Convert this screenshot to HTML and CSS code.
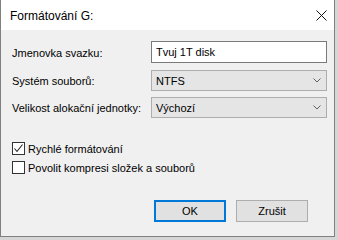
FILE: index.html
```html
<!DOCTYPE html>
<html lang="cs">
<head>
<meta charset="utf-8">
<link rel="stylesheet" href="styles.css">
</head>
<body>
<div class="window">
  <div class="titlebar">
    <span class="title">Formátování G:</span>
    <svg class="close" width="11" height="11" viewBox="0 0 11 11"><path d="M0.5 0.5 L10.5 10.5 M10.5 0.5 L0.5 10.5" stroke="#111" stroke-width="1" fill="none"/></svg>
  </div>
  <div class="content">
    <div class="form">
      <label class="label">Jmenovka svazku:</label>
      <div class="textbox">Tvuj 1T disk</div>
      <label class="label">Systém souborů:</label>
      <div class="combo"><span>NTFS</span><svg width="8" height="5" viewBox="0 0 8 5"><path d="M0.5 0.5 L4 4 L7.5 0.5" stroke="#606060" fill="none"/></svg></div>
      <label class="label">Velikost alokační jednotky:</label>
      <div class="combo"><span>Výchozí</span><svg width="8" height="5" viewBox="0 0 8 5"><path d="M0.5 0.5 L4 4 L7.5 0.5" stroke="#606060" fill="none"/></svg></div>
    </div>
    <div class="checks">
      <div class="check"><span class="box"><svg width="11" height="11" viewBox="0 0 11 11"><path d="M1.5 5.5 L4 8.5 L9.5 1.5" stroke="#222" stroke-width="1.1" fill="none"/></svg></span><span>Rychlé formátování</span></div>
      <div class="check"><span class="box"></span><span>Povolit kompresi složek a souborů</span></div>
    </div>
    <div class="buttons">
      <div class="btn default">OK</div>
      <div class="btn">Zrušit</div>
    </div>
  </div>
</div>
</body>
</html>
```
FILE: styles.css
```css
html, body {
  margin: 0;
  padding: 0;
}
body {
  width: 338px;
  height: 240px;
  background: #d6d6d6;
  font-family: "Liberation Sans", Arial, sans-serif;
  font-size: 11px;
  color: #000;
  overflow: hidden;
}
.window {
  box-sizing: border-box;
  width: 335px;
  height: 237px;
  border: 1px solid #808080;
  border-top: none;
  background: #f0f0f0;
  display: flex;
  flex-direction: column;
}
.titlebar {
  height: 30px;
  background: #fff;
  display: flex;
  align-items: center;
  justify-content: space-between;
  padding: 0 7px 0 9px;
  flex-shrink: 0;
}
.title {
  font-size: 12px;
  margin-top: 1px;
}
.close {
  display: block;
  margin-top: 1px;
}
.content {
  padding: 11px 7px 0 11px;
  display: flex;
  flex-direction: column;
}
.form {
  display: grid;
  grid-template-columns: 139px 176px;
  grid-auto-rows: auto;
  row-gap: 6px;
  align-items: center;
}
.label {
  white-space: nowrap;
}
.textbox {
  box-sizing: border-box;
  height: 22px;
  border: 1px solid #7a7a7a;
  background: #fff;
  padding: 0 4px;
  display: flex;
  align-items: center;
  margin-bottom: 1px;
}
.combo {
  box-sizing: border-box;
  height: 21px;
  border: 1px solid #adadad;
  background: #e5e5e5;
  padding: 0 5px 0 4px;
  display: flex;
  align-items: center;
  justify-content: space-between;
}
.combo svg {
  display: block;
}
.checks {
  margin-top: 24px;
  display: flex;
  flex-direction: column;
  gap: 6px;
}
.check {
  display: flex;
  align-items: center;
  gap: 3px;
  height: 13px;
}
.box {
  box-sizing: border-box;
  width: 13px;
  height: 13px;
  border: 1px solid #333;
  background: #fff;
  display: flex;
  align-items: center;
  justify-content: center;
}
.box svg {
  display: block;
}
.buttons {
  margin-top: 26px;
  display: flex;
  justify-content: flex-end;
  gap: 10px;
  padding-right: 19px;
}
.btn {
  box-sizing: border-box;
  width: 72px;
  height: 22px;
  border: 1px solid #adadad;
  background: #e1e1e1;
  display: flex;
  align-items: center;
  justify-content: center;
}
.btn.default {
  border: 2px solid #0078d7;
}
```
